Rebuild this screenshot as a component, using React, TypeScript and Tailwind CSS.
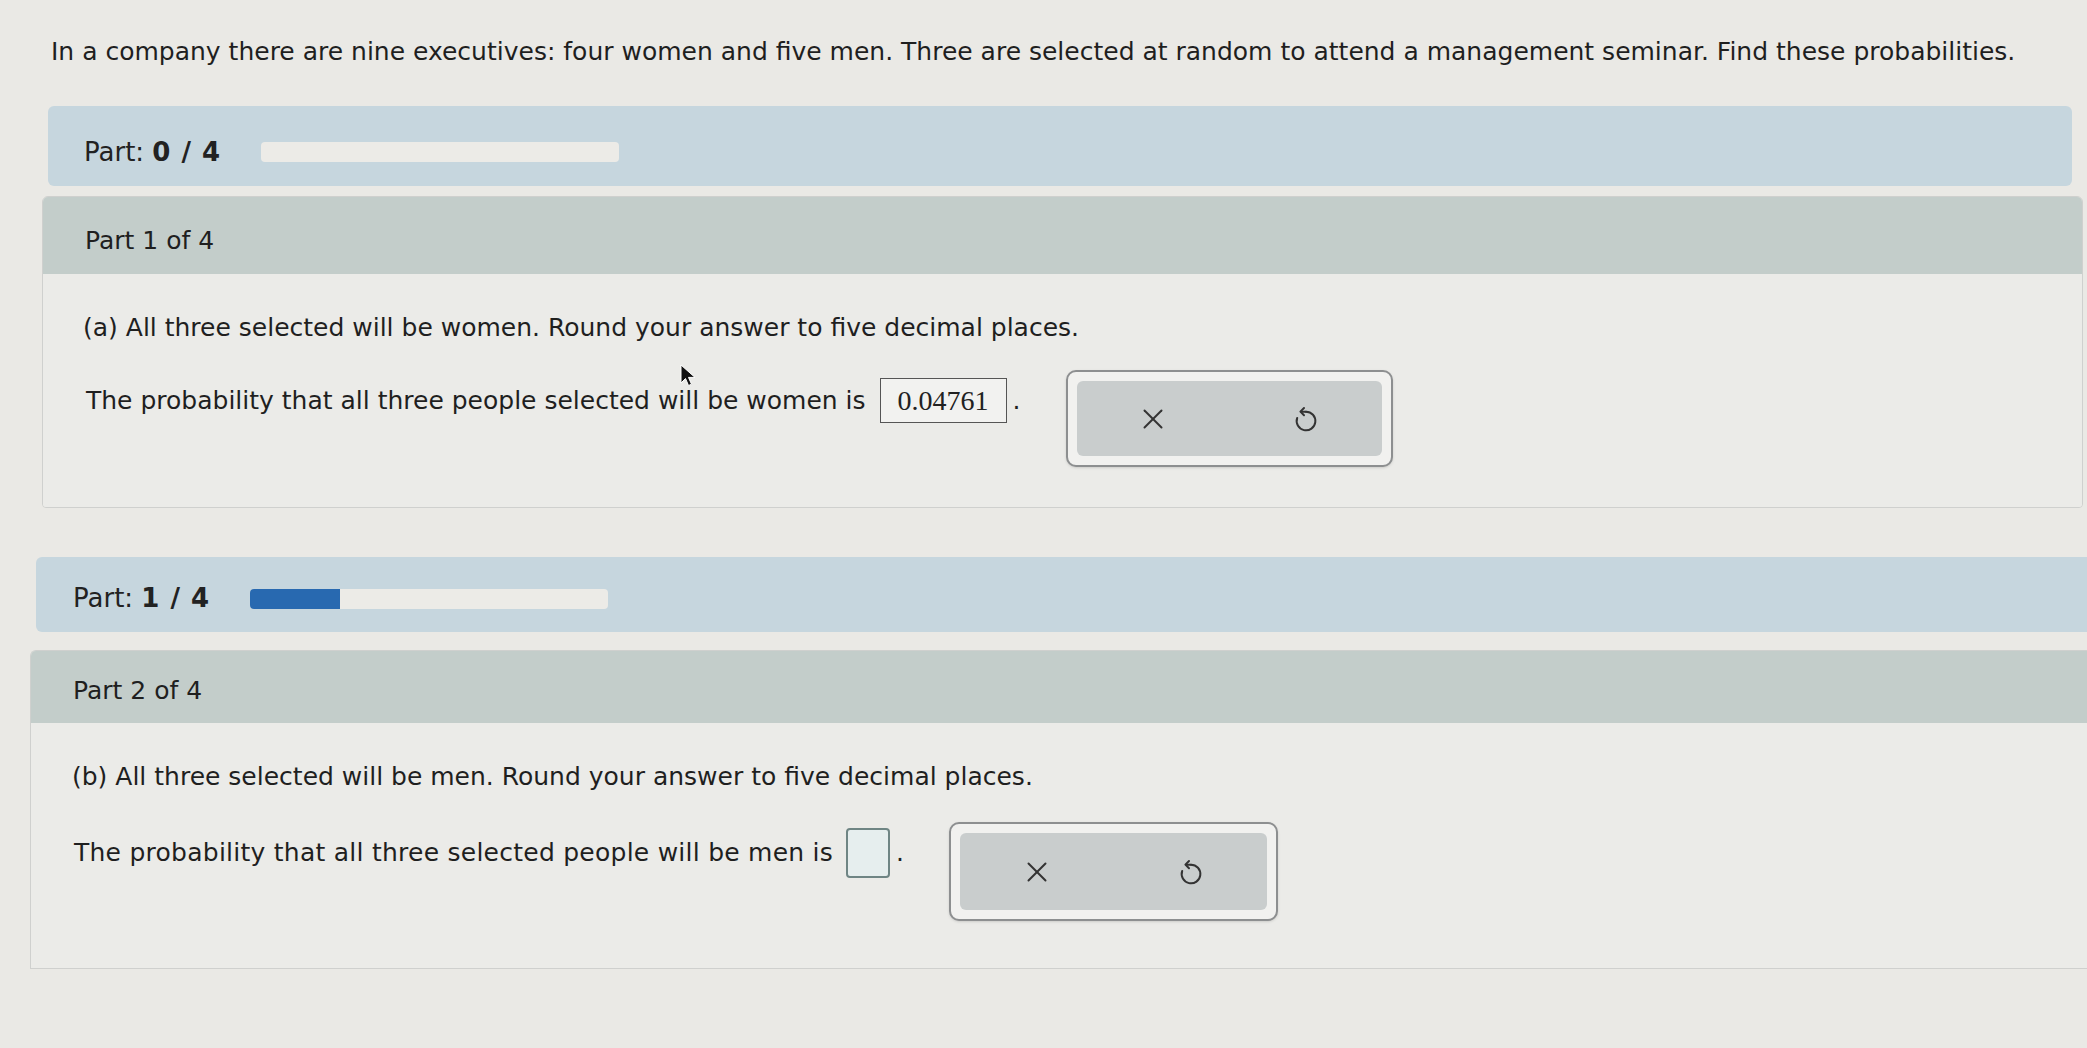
import { X } from "lucide-react";

function UndoIcon() {
  return (
    <svg width="32" height="32" viewBox="0 0 24 24" fill="none" stroke="#333" strokeWidth={1.5} strokeLinecap="round" strokeLinejoin="round">
      <path d="M12 6.5a7 7 0 1 1 -6.6 4.7" />
      <path d="M12 6.5H8.5" />
      <path d="M10.5 3.8 7.8 6.5l2.7 2.7" />
    </svg>
  );
}

function ActionButtons({ className }: { className: string }) {
  return (
    <div className={`rounded-[10px] border-2 border-[#8d8f90] bg-[#f1f1ef] p-[9px] shadow-sm ${className}`}>
      <div className="flex h-full items-center justify-around rounded-[6px] bg-[#c9cdcd]">
        <X size={34} strokeWidth={1.4} color="#333" />
        <UndoIcon />
      </div>
    </div>
  );
}

function PartProgress({ done, className }: { done: number; className: string }) {
  return (
    <div className={`flex items-center bg-[#c6d6de] ${className}`}>
      <span className="text-[26px] text-[#222]">
        Part: <b className="tracking-[1px]">{done} / 4</b>
      </span>
      <div className="ml-[40px] h-[20px] w-[358px] overflow-hidden rounded-[4px] bg-[#ecebe7]">
        <div className="h-full bg-[#2869b0]" style={{ width: `${(done / 4) * 100}%` }} />
      </div>
    </div>
  );
}

export default function App() {
  return (
    <div
      className="relative min-h-screen bg-[#eae9e5] pt-[36px] text-[#1f1f1f]"
      style={{ fontFamily: '"DejaVu Sans", Verdana, sans-serif' }}
    >
      <p className="ml-[51px] text-[25px] leading-[32px]">
        In a company there are nine executives: four women and five men. Three are selected at random to attend a management seminar. Find these probabilities.
      </p>

      {/* part 1 */}
      <PartProgress done={0} className="ml-[48px] mr-[15px] mt-[38px] h-[80px] rounded-[6px] pl-[36px] pt-[12px]" />
      <div className="ml-[42px] mr-[4px] mt-[10px] overflow-hidden rounded-t-[6px] rounded-b-[4px] border border-[#cfd0ce]">
        <div className="flex h-[77px] items-center bg-[#c3cdca] pl-[42px] pt-[10px] text-[25px]">Part 1 of 4</div>
        <div className="h-[233px] bg-[#ebebe8] pl-[40px] pt-[38px]">
          <p className="text-[25px] leading-[32px]">(a) All three selected will be women. Round your answer to five decimal places.</p>
          <div className="mt-[26px] flex items-start">
            <div className="mt-[8px] flex items-center text-[25px]">
              <span className="ml-[3px]">The probability that all three people selected will be women is</span>
              <span className="ml-[14px] flex h-[45px] w-[127px] items-center justify-center border border-[#555] bg-[#f2f2f0] text-[28px] text-[#222]" style={{ fontFamily: '"Liberation Serif", serif' }}>
                0.04761
              </span>
              <span className="ml-[6px]">.</span>
            </div>
            <ActionButtons className="ml-[45px] h-[97px] w-[327px]" />
          </div>
        </div>
      </div>

      {/* part 2 */}
      <PartProgress done={1} className="ml-[36px] mt-[49px] h-[75px] rounded-l-[6px] pl-[37px] pt-[8px]" />
      <div className="ml-[30px] mt-[18px] overflow-hidden rounded-tl-[6px] border-y border-l border-[#cfd0ce]">
        <div className="flex h-[72px] items-center bg-[#c3cdca] pl-[42px] pt-[8px] text-[25px]">Part 2 of 4</div>
        <div className="h-[245px] bg-[#ebebe8] pl-[41px] pt-[38px]">
          <p className="text-[25px] leading-[32px]">(b) All three selected will be men. Round your answer to five decimal places.</p>
          <div className="mt-[29px] flex items-start">
            <div className="mt-[6px] flex items-center text-[25px]">
              <span className="ml-[2px] tracking-[0.25px]">The probability that all three selected people will be men is</span>
              <span className="ml-[13px] h-[50px] w-[44px] rounded-[4px] border-2 border-[#6f8584] bg-[#e6eeee]" />
              <span className="ml-[6px]">.</span>
            </div>
            <ActionButtons className="ml-[45px] h-[99px] w-[329px]" />
          </div>
        </div>
      </div>

      {/* mouse pointer */}
      <svg className="absolute left-[680px] top-[364px]" width="16" height="24" viewBox="0 0 16 24">
        <path d="M1 1v18l4.5-4.5 3 7 3-1.3-3-6.8H15z" fill="#111" stroke="#fff" strokeWidth="1" />
      </svg>
    </div>
  );
}
